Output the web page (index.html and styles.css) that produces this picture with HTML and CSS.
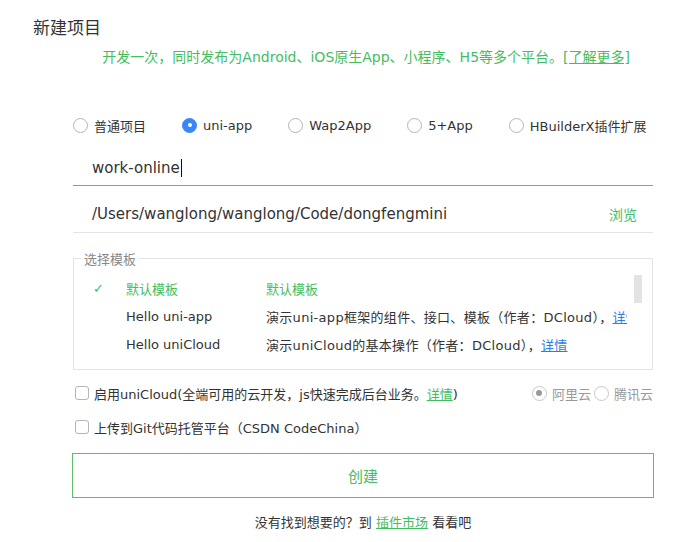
FILE: index.html
```html
<!DOCTYPE html>
<html lang="zh">
<head>
<meta charset="utf-8">
<link rel="stylesheet" href="styles.css">
</head>
<body>
<div class="page">
  <h1 class="title">新建项目</h1>
  <p class="intro">开发一次，同时发布为Android、iOS原生App、小程序、H5等多个平台。<a class="green-link">[了解更多]</a></p>
  <div class="form">
    <div class="types">
      <label class="opt"><span class="radio"></span>普通项目</label>
      <label class="opt"><span class="radio on"></span>uni-app</label>
      <label class="opt"><span class="radio"></span>Wap2App</label>
      <label class="opt"><span class="radio"></span>5+App</label>
      <label class="opt"><span class="radio"></span>HBuilderX插件扩展</label>
    </div>
    <div class="field name"><span class="value">work-online</span><span class="caret"></span></div>
    <div class="field path"><span class="value">/Users/wanglong/wanglong/Code/dongfengmini</span><span class="browse">浏览</span></div>
    <fieldset class="templates">
      <legend>选择模板</legend>
      <div class="rows">
        <div class="row sel"><span class="check">✓</span><span class="tname">默认模板</span><span class="tdesc">默认模板</span></div>
        <div class="row"><span class="check"></span><span class="tname">Hello uni-app</span><span class="tdesc">演示uni-app框架的组件、接口、模板（作者：DCloud），<a class="blue-link">详情</a></span></div>
        <div class="row"><span class="check"></span><span class="tname">Hello uniCloud</span><span class="tdesc">演示uniCloud的基本操作（作者：DCloud），<a class="blue-link">详情</a></span></div>
      </div>
      <div class="thumb"></div>
    </fieldset>
    <div class="checkline first">
      <label class="chk"><span class="box"></span><span>启用uniCloud(全端可用的云开发，js快速完成后台业务。<a class="green-link">详情</a>)</span></label>
      <div class="clouds">
        <span class="copt"><span class="radio dis on"></span>阿里云</span>
        <span class="copt"><span class="radio dis"></span>腾讯云</span>
      </div>
    </div>
    <div class="checkline">
      <label class="chk"><span class="box"></span><span>上传到Git代码托管平台（CSDN CodeChina）</span></label>
    </div>
    <button class="create">创建</button>
    <p class="footer">没有找到想要的？到 <a class="green-link">插件市场</a> 看看吧</p>
  </div>
</div>
</body>
</html>
```

FILE: styles.css
```css
* { box-sizing: border-box; }
html, body { margin: 0; padding: 0; background: #fff; }
body {
  font-family: "DejaVu Sans", "Noto Sans CJK SC", sans-serif;
  color: #333;
  font-size: 13px;
}
.page { width: 696px; height: 542px; overflow: hidden; }
.title {
  margin: 16px 0 0 33px;
  font-size: 17px;
  font-weight: normal;
  line-height: 24px;
  color: #333;
}
.intro {
  margin: 8px 0 0 0;
  padding-right: 66px;
  text-align: right;
  font-size: 14px;
  line-height: 18px;
  color: #45bd5f;
}
.green-link { color: #45bd5f; text-decoration: underline; }
.blue-link { color: #2b7de9; text-decoration: underline; }
.form { margin: 0 43px 0 73px; display: flex; flex-direction: column; }
.types {
  display: flex;
  gap: 36px;
  margin-top: 49px;
  height: 20px;
  align-items: center;
  font-size: 13px;
}
.opt { display: flex; align-items: center; gap: 6px; }
.radio {
  width: 15px; height: 15px;
  border: 1px solid #b5b5b5;
  border-radius: 50%;
  background: #fff;
  display: inline-block;
  position: relative;
  flex: none;
}
.radio.on { background: #3b86f7; border-color: #3b86f7; }
.radio.on::after {
  content: "";
  position: absolute;
  left: 4.5px; top: 4.5px;
  width: 4px; height: 4px;
  border-radius: 50%;
  background: #fff;
}
.field {
  display: flex;
  align-items: center;
  height: 47px;
  padding-left: 19px;
  font-size: 15px;
  border-bottom: 1px solid #e3e3e3;
}
.field.name { margin-top: 5px; height: 46px; border-bottom: 1px solid #5cbd6a; padding-top: 10px; }
.caret { display: inline-block; width: 1px; height: 18px; background: #111; margin-left: 1px; }
.path { justify-content: space-between; padding-right: 16px; padding-top: 10px; height: 47px; }
.browse { color: #45bd5f; font-size: 14px; }
.templates {
  margin: 16px 0 0 0;
  padding: 6px 10px 8px 19px;
  border: 1px solid #e3e3e3;
  position: relative;
  height: 121px;
}
.templates legend {
  color: #888;
  font-size: 13px;
  padding: 0 3px;
  margin-left: -12px;
}
.rows { display: flex; flex-direction: column; width: 534px; overflow: hidden; }
.row {
  display: grid;
  grid-template-columns: 33px 140px auto;
  height: 28px;
  align-items: center;
  white-space: nowrap;
  font-size: 13px;
}
.row .tdesc { letter-spacing: 0.3px; }
.row.sel .tdesc { letter-spacing: 0; }
.row.sel { color: #45bd5f; }
.check { color: #45bd5f; font-size: 13px; }
.thumb {
  position: absolute;
  right: 10px; top: 7px;
  width: 8px; height: 28px;
  background: #e3e3e3;
}
.checkline {
  display: flex;
  justify-content: space-between;
  align-items: center;
  height: 34px;
}
.checkline.first { margin-top: 6px; }
.chk { display: flex; align-items: center; gap: 5px; font-size: 13px; margin-left: 2px; }
.box {
  width: 14px; height: 14px;
  border: 1px solid #b5b5b5;
  border-radius: 3px;
  display: inline-block;
  flex: none;
}
.clouds { display: flex; gap: 3px; color: #999; font-size: 13px; }
.copt { display: flex; align-items: center; gap: 5px; }
.radio.dis { border-color: #c8c8c8; }
.radio.dis.on { background: #fff; border-color: #c8c8c8; }
.radio.dis.on::after { background: #999; left: 3.5px; top: 3.5px; width: 6px; height: 6px; }
.create {
  margin-top: 9px;
  height: 45px;
  width: 582px;
  margin-left: -1px;
  background: #fff;
  border: 1px solid #5cbd6a;
  color: #45bd5f;
  font-family: "DejaVu Sans", "Noto Sans CJK SC", sans-serif;
  font-size: 15px;
}
.footer {
  margin: 14px 0 0 0;
  text-align: center;
  font-size: 13px;
}
```
